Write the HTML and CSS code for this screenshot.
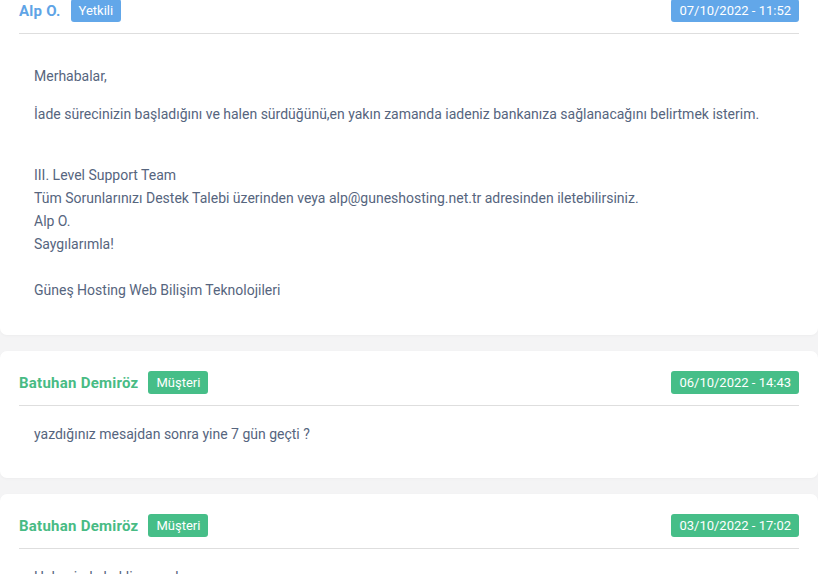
FILE: index.html
```html
<html>
<head>
  <meta http-equiv="Content-type" content="text/html;charset=UTF-8">
  <meta name="viewport" content="width=device-width, initial-scale=1.0"/>
  <title>Destek Talebi</title>
  <link rel="stylesheet" href="styles.css">
</head>
<body>
  <div id="replies">
    <div class="reply staff">
      <div class="reply-head">
        <span class="name">Alp O.</span>
        <span class="tag">Yetkili</span>
        <span class="date">07/10/2022 - 11:52</span>
      </div>
      <div class="reply-body msg">
        <p>Merhabalar,</p>
        <p>İade sürecinizin başladığını ve halen sürdüğünü,en yakın zamanda iadeniz bankanıza sağlanacağını belirtmek isterim.</p>
        <p><br>III. Level Support Team<br>
        Tüm Sorunlarınızı Destek Talebi üzerinden veya alp@guneshosting.net.tr adresinden iletebilirsiniz.<br>
        Alp O.<br>
        Saygılarımla!<br>
        <br>
        Güneş Hosting Web Bilişim Teknolojileri</p>
      </div>
    </div>
    <div class="reply client">
      <div class="reply-head">
        <span class="name">Batuhan Demiröz</span>
        <span class="tag">Müşteri</span>
        <span class="date">06/10/2022 - 14:43</span>
      </div>
      <div class="reply-body">
        yazdığınız mesajdan sonra yine 7 gün geçti ?
      </div>
    </div>
    <div class="reply client">
      <div class="reply-head">
        <span class="name">Batuhan Demiröz</span>
        <span class="tag">Müşteri</span>
        <span class="date">03/10/2022 - 17:02</span>
      </div>
      <div class="reply-body">
        Halen iade bekliyorum hocam
      </div>
    </div>
  </div>
</body>
</html>
```
FILE: styles.css
```css
body{
    margin:0;
    background:#f4f4f5;
    font-family: Roboto, "Open Sans", sans-serif;
    font-size:14px;
    color:#56657e;
}
#replies{
    margin-top:-21px;
    display:flex;
    flex-direction:column;
    gap:16px;
}
.reply{
    background:white;
    border-radius:7px;
    box-shadow:0 1px 3px rgba(0,0,0,0.03);
    padding:20px 19px 0 19px;
}
.reply-head{
    display:flex;
    align-items:center;
    border-bottom:1px solid #dedede;
    padding-bottom:11px;
}
.name{
    font-size:15px;
    font-weight:bold;
    letter-spacing:0.25px;
    margin-right:10px;
}
.tag, .date{
    color:white;
    font-size:13px;
    line-height:23px;
    padding:0 8px;
    border-radius:3px;
}
.date{
    margin-left:auto;
}
.staff .name{ color:#5fa4e6; }
.staff .tag, .staff .date{ background:#62a7e9; }
.client .name{ color:#48bb84; }
.client .tag, .client .date{ background:#46be88; }

.reply-body{
    line-height:23px;
    padding:17px 15px 32px 15px;
}
.msg{
    padding:31px 15px 33px 15px;
}
.msg p{
    margin:0 0 15px 0;
}
.msg p:last-child{
    margin-bottom:0;
}
```
